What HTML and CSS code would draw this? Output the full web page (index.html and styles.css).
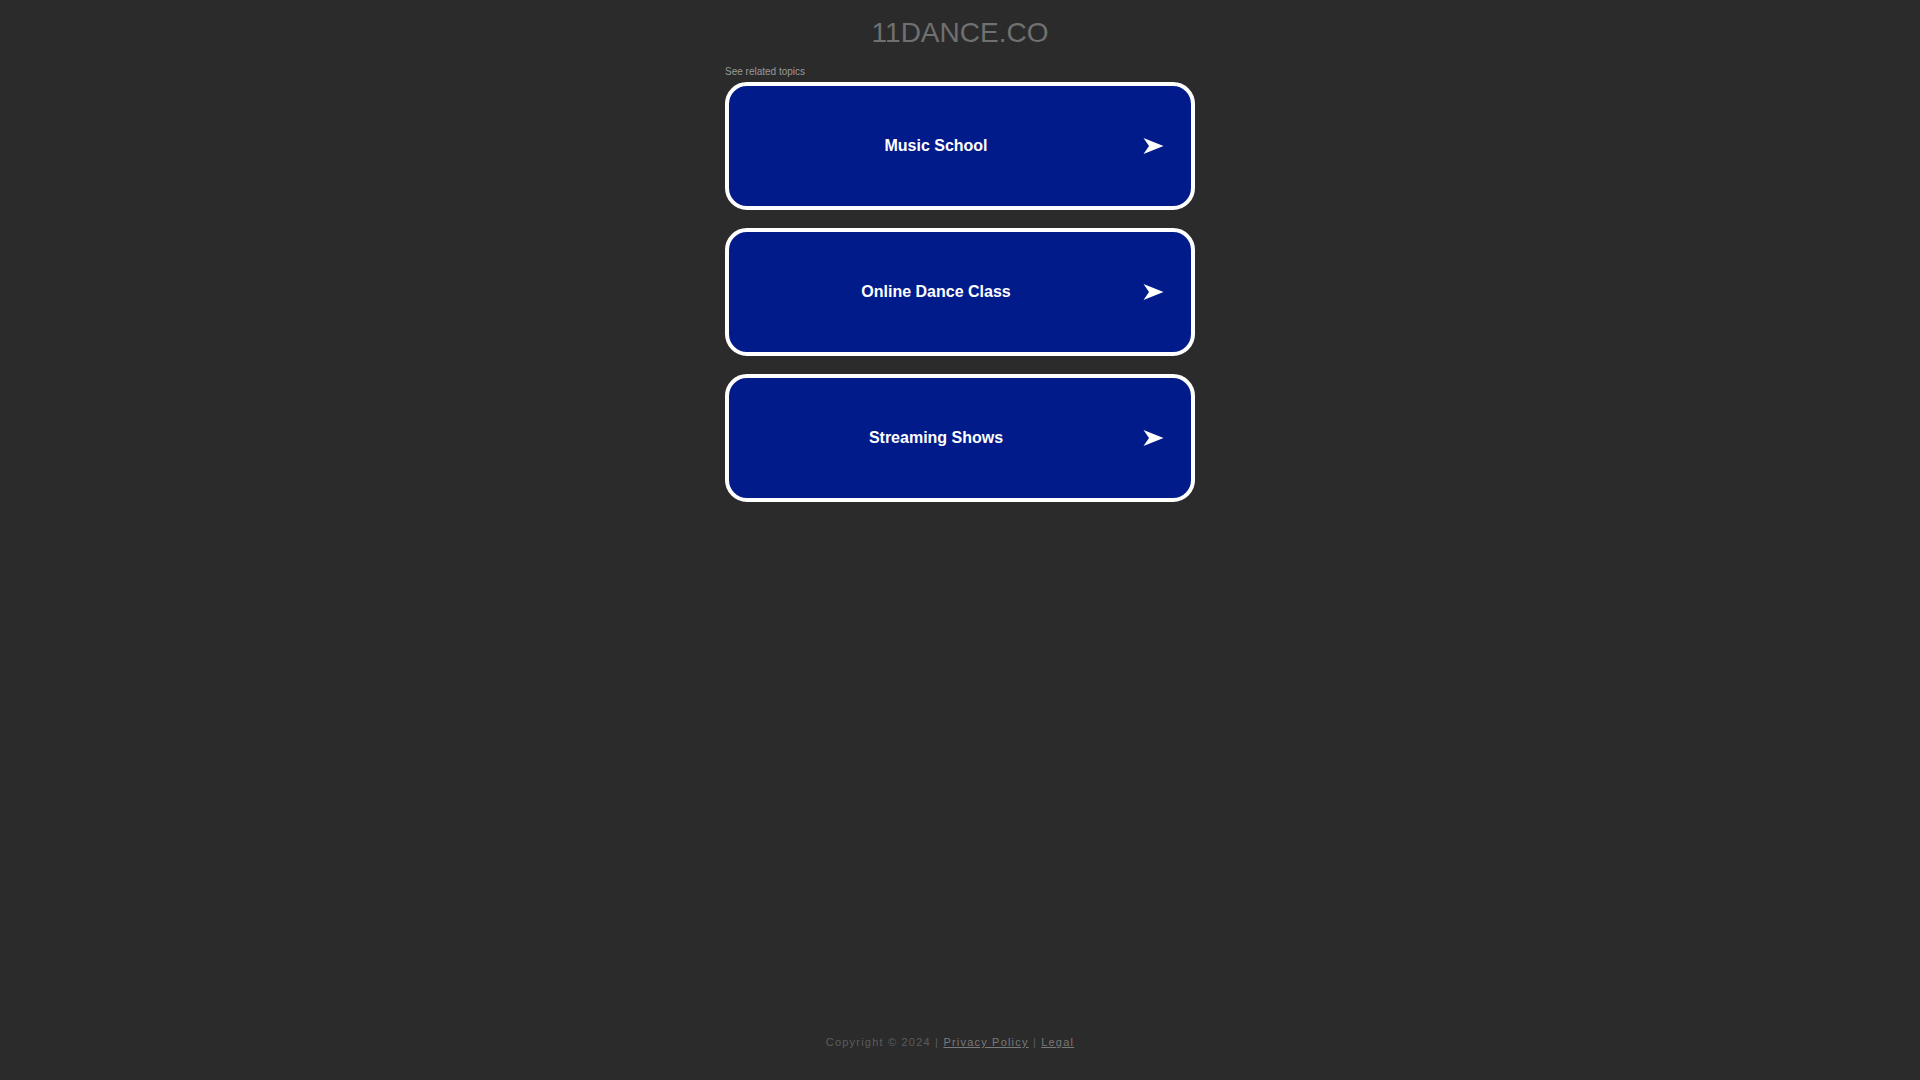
FILE: index.html
```html
<!DOCTYPE html>
<html lang="en">
<head>
<meta charset="utf-8">
<title>11dance.co</title>
<link rel="stylesheet" href="styles.css">
</head>
<body>
<div class="page">
  <header class="header">
    <h1 class="domain">11DANCE.CO</h1>
  </header>
  <main class="content">
    <p class="related">See related topics</p>
    <ul class="ads">
      <li class="ad"><a class="ad-link" href="#"><span class="ad-text">Music School</span><svg class="ad-arrow" viewBox="0 0 20 16" width="21" height="16"><polygon points="0,0 20,8 0,16 5.5,8" fill="#ffffff"/></svg></a></li>
      <li class="ad"><a class="ad-link" href="#"><span class="ad-text">Online Dance Class</span><svg class="ad-arrow" viewBox="0 0 20 16" width="21" height="16"><polygon points="0,0 20,8 0,16 5.5,8" fill="#ffffff"/></svg></a></li>
      <li class="ad"><a class="ad-link" href="#"><span class="ad-text">Streaming Shows</span><svg class="ad-arrow" viewBox="0 0 20 16" width="21" height="16"><polygon points="0,0 20,8 0,16 5.5,8" fill="#ffffff"/></svg></a></li>
    </ul>
  </main>
  <footer class="footer">
    <span class="copy">Copyright © 2024 | </span><a class="footer-link" href="#">Privacy Policy</a><span class="copy"> | </span><a class="footer-link" href="#">Legal</a>
  </footer>
</div>
</body>
</html>
```

FILE: styles.css
```css
html, body {
  margin: 0;
  padding: 0;
  background: #2b2b2b;
  font-family: "Liberation Sans", Arial, sans-serif;
}

.page {
  min-height: 100vh;
  display: flex;
  flex-direction: column;
  align-items: center;
  box-sizing: border-box;
}

.header {
  padding-top: 17px;
  text-align: center;
}

.domain {
  margin: 0;
  font-size: 28px;
  line-height: 32px;
  font-weight: normal;
  color: #707070;
  letter-spacing: 0;
}

.content {
  width: 470px;
  margin-top: 17px;
}

.related {
  margin: 0 0 4px 0;
  font-size: 10px;
  line-height: 12px;
  color: #9a9a9a;
}

.ads {
  list-style: none;
  margin: 0;
  padding: 0;
  display: flex;
  flex-direction: column;
  gap: 18px;
}

.ad-link {
  display: flex;
  align-items: center;
  height: 128px;
  box-sizing: border-box;
  border: 4px solid #ffffff;
  border-radius: 22px;
  background: #021b8b;
  padding-right: 27px;
  text-decoration: none;
}

.ad-text {
  flex: 1;
  text-align: center;
  color: #ffffff;
  font-weight: bold;
  font-size: 16px;
  line-height: 20px;
}

.ad-arrow {
  display: block;
  flex: none;
}

.footer {
  margin-top: auto;
  padding-bottom: 31px;
  padding-right: 20px;
  font-size: 11px;
  line-height: 13px;
  letter-spacing: 1.2px;
  color: #5c5c5c;
}

.footer-link {
  color: #7a7a7a;
  text-decoration: underline;
}
```
